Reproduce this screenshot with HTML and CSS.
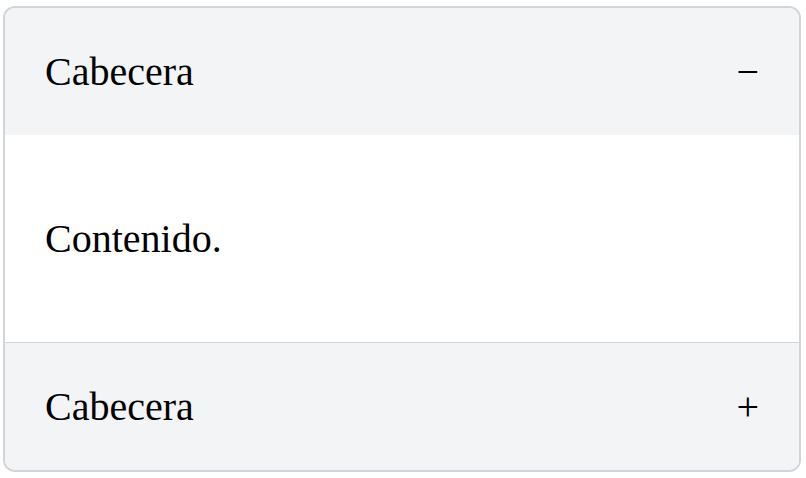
FILE: index.html
```html
<!DOCTYPE html>
<html lang="es">
<head>
<meta charset="utf-8">
<title>Acordeón</title>
<link rel="stylesheet" href="styles.css">
</head>
<body>
<div class="accordion">
  <section class="item item-open">
    <button class="item-header" type="button" aria-expanded="true">
      <span class="item-title">Cabecera</span>
      <span class="item-icon">−</span>
    </button>
    <div class="item-body">
      <p>Contenido.</p>
    </div>
  </section>
  <section class="item">
    <button class="item-header" type="button" aria-expanded="false">
      <span class="item-title">Cabecera</span>
      <span class="item-icon">+</span>
    </button>
  </section>
</div>
</body>
</html>
```
FILE: styles.css
```css
html, body {
  margin: 0;
  padding: 0;
  background: #ffffff;
}

body {
  padding: 6px 5px 6px 3px;
  font-family: "Liberation Serif", "Times New Roman", serif;
  font-size: 40px;
  color: #000000;
}

.accordion {
  border: 2px solid #d1d5db;
  border-radius: 12px;
  overflow: hidden;
}

.item + .item {
  border-top: 1px solid #d1d5db;
}

.item-header {
  display: flex;
  justify-content: space-between;
  align-items: center;
  width: 100%;
  margin: 0;
  padding: 40px;
  border: 0;
  background: #f3f4f6;
  font: inherit;
  line-height: 47px;
  color: inherit;
  text-align: left;
  cursor: pointer;
}

.item-body {
  padding: 40px;
  background: #ffffff;
}

.item-body p {
  margin: 40px 0;
  line-height: 47px;
}
```
